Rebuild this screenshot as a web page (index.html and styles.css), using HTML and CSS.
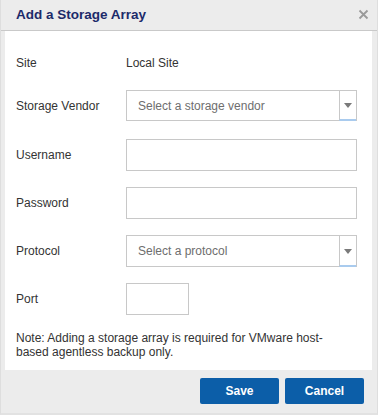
FILE: index.html
```html
<!DOCTYPE html>
<html>
<head>
<meta charset="utf-8">
<link rel="stylesheet" href="styles.css">
</head>
<body>
<div class="dialog">
  <div class="header">
    <span class="title">Add a Storage Array</span>
    <svg class="close" width="11" height="11" viewBox="0 0 11 11"><path d="M1.5 1.5 L9.5 9.5 M9.5 1.5 L1.5 9.5" stroke="#9a9a9a" stroke-width="1.8" fill="none"/></svg>
  </div>
  <div class="content">
    <div class="row row-site">
      <div class="label">Site</div>
      <div class="value">Local Site</div>
    </div>
    <div class="row row-vendor">
      <div class="label">Storage Vendor</div>
      <div class="select">
        <span class="placeholder">Select a storage vendor</span>
        <span class="arrow"><svg width="8" height="5" viewBox="0 0 8 5"><path d="M0 0 H8 L4 5 Z" fill="#7a7a7a"/></svg></span>
      </div>
    </div>
    <div class="row">
      <div class="label">Username</div>
      <div class="input"></div>
    </div>
    <div class="row">
      <div class="label">Password</div>
      <div class="input"></div>
    </div>
    <div class="row">
      <div class="label">Protocol</div>
      <div class="select tall">
        <span class="placeholder">Select a protocol</span>
        <span class="arrow"><svg width="8" height="5" viewBox="0 0 8 5"><path d="M0 0 H8 L4 5 Z" fill="#7a7a7a"/></svg></span>
      </div>
    </div>
    <div class="row">
      <div class="label">Port</div>
      <div class="input port"></div>
    </div>
    <p class="note">Note: Adding a storage array is required for VMware host-based agentless backup only.</p>
  </div>
  <div class="footer">
    <button class="btn">Save</button>
    <button class="btn">Cancel</button>
  </div>
</div>
</body>
</html>
```
FILE: styles.css
```css
html, body {
  margin: 0;
  padding: 0;
  background: #ffffff;
}
body {
  font-family: "Liberation Sans", Arial, sans-serif;
  font-size: 12px;
  color: #333333;
}
.dialog {
  width: 378px;
  height: 415px;
  box-sizing: border-box;
  background: #ececec;
  border-left: 1px solid #dedede;
  border-right: 1px solid #dedede;
  border-bottom: 2px solid #e2e2e2;
  display: flex;
  flex-direction: column;
}
.header {
  height: 30px;
  border-bottom: 1px solid #c9c9c9;
  display: flex;
  align-items: center;
  justify-content: space-between;
  padding: 0 8px 0 15px;
  flex-shrink: 0;
}
.title {
  font-size: 13.5px;
  font-weight: bold;
  color: #1c2a6a;
  margin-top: -1px;
}
.close {
  display: block;
  margin-top: -2px;
}
.content {
  background: #ffffff;
  margin: 0 5px 0 4px;
  padding: 22px 15px 0 11px;
  height: 339px;
  box-sizing: border-box;
  flex-shrink: 0;
}
.row {
  display: flex;
  align-items: center;
  height: 32px;
  margin-bottom: 16px;
}
.row-site {
  height: 20px;
  margin-bottom: 17px;
}
.row-vendor {
  height: 31px;
  margin-bottom: 18px;
}
.label {
  width: 110px;
  flex-shrink: 0;
  color: #333333;
}
.value {
  color: #333333;
}
.input {
  width: 231px;
  height: 32px;
  box-sizing: border-box;
  border: 1px solid #c8c8c8;
  background: #ffffff;
}
.input.port {
  width: 63px;
}
.select {
  width: 231px;
  height: 31px;
  box-sizing: border-box;
  border: 1px solid #c8c8c8;
  background: #ffffff;
  display: flex;
  align-items: center;
  justify-content: space-between;
}
.select.tall {
  height: 32px;
}
.placeholder {
  padding-left: 11px;
  color: #6e6e6e;
}
.arrow {
  width: 17px;
  box-sizing: border-box;
  border-left: 1px solid #c8c8c8;
  border-bottom: 2px solid #a9cbee;
  display: flex;
  align-items: center;
  justify-content: center;
  margin-bottom: -1px;
  height: calc(100% + 1px);
}
.arrow svg {
  display: block;
  margin-top: 1px;
}
.note {
  margin: 11px 0 0 0;
  max-width: 335px;
  line-height: 14px;
  color: #333333;
}
.footer {
  flex: 1;
  display: flex;
  justify-content: flex-end;
  align-items: center;
  gap: 6px;
  padding: 0 13px 2px 0;
}
.btn {
  width: 79px;
  height: 26px;
  border: none;
  border-radius: 2px;
  background: #0c5ea8;
  color: #ffffff;
  font-family: "Liberation Sans", Arial, sans-serif;
  font-size: 12px;
  font-weight: bold;
  padding: 0;
}
```
